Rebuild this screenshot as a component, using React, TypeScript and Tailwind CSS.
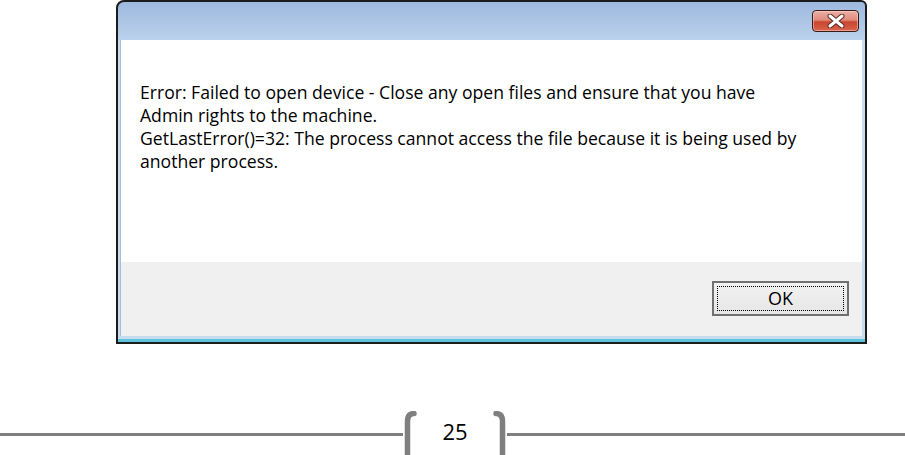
const Bracket = ({ flip }: { flip?: boolean }) => (
  <svg width="14" height="60" viewBox="0 0 14 60" className={flip ? "-scale-x-100" : ""}>
    <path
      d="M11 2.5 Q4.5 2.5 4.5 10 L4.5 50 Q4.5 57.5 11 57.5"
      fill="none"
      stroke="#7f7f7f"
      strokeWidth="5.5"
      strokeLinecap="round"
    />
  </svg>
);

const CloseButton = () => (
  <button className="w-[47px] h-[22px] rounded-[4px] border border-[#3a1a18] bg-[linear-gradient(to_bottom,#eab0a6_0%,#e08a7a_45%,#c9462f_55%,#d9644c_100%)] flex items-center justify-center shadow-[inset_0_0_0_1px_rgba(255,220,210,0.5)]">
    <svg width="18" height="14" viewBox="0 0 18 14">
      <path d="M3 2 L15 12 M15 2 L3 12" stroke="#5a2a24" strokeWidth="5" strokeLinecap="round" />
      <path d="M3 2 L15 12 M15 2 L3 12" stroke="#ffffff" strokeWidth="3" strokeLinecap="round" />
    </svg>
  </button>
);

export default function App() {
  return (
    <div className="w-[905px] h-[455px] bg-white overflow-hidden">
      {/* dialog window */}
      <div className="ml-[116px] w-[751px] h-[344px] border-2 border-[#1b1b1b] rounded-tl-[8px] rounded-tr-[6px] bg-[linear-gradient(to_bottom,#9db9de_0px,#bcd2ec_38px,#c8dcf0_38px,#c8dcf0_337px,#5ec3dd_337px)] flex flex-col pl-[2px] pr-[3px] pb-[6px]">
        <div className="h-[38px] flex justify-end items-start pt-[8px] pr-[3px]">
          <CloseButton />
        </div>
        <div className="flex-1 flex flex-col border-l border-[#a9bdd5]">
          <div className="h-[222px] bg-white pt-[41px] pl-[19px] text-[17.6px] leading-[23px] text-black font-['Open_Sans',sans-serif] whitespace-nowrap">
            Error: Failed to open device - Close any open files and ensure that you have
            <br />
            Admin rights to the machine.
            <br />
            GetLastError()=32: The process cannot access the file because it is being used by
            <br />
            another process.
          </div>
          <div className="flex-1 bg-[#f0f0f0] flex justify-end items-start pt-[19px] pr-[13px]">
            <button className="w-[137px] h-[35px] border-2 border-[#707070] bg-[linear-gradient(to_bottom,#f2f2f2,#e6e6e6)] p-[3px]">
              <div className="w-full h-full border border-dotted border-black flex items-center justify-center text-[18px] text-black font-['Open_Sans',sans-serif]">
                OK
              </div>
            </button>
          </div>
        </div>
      </div>

      {/* page footer */}
      <div className="mt-[67px] flex items-start h-[60px]">
        <div className="w-[403px] h-[3px] bg-[#7f7f7f] mt-[22px]" />
        <Bracket />
        <div className="w-[76px] flex justify-center pt-[6px] text-[22px] leading-[28px] text-black font-['Open_Sans',sans-serif]">
          25
        </div>
        <Bracket flip />
        <div className="flex-1 h-[3px] bg-[#7f7f7f] mt-[22px]" />
      </div>
    </div>
  );
}
